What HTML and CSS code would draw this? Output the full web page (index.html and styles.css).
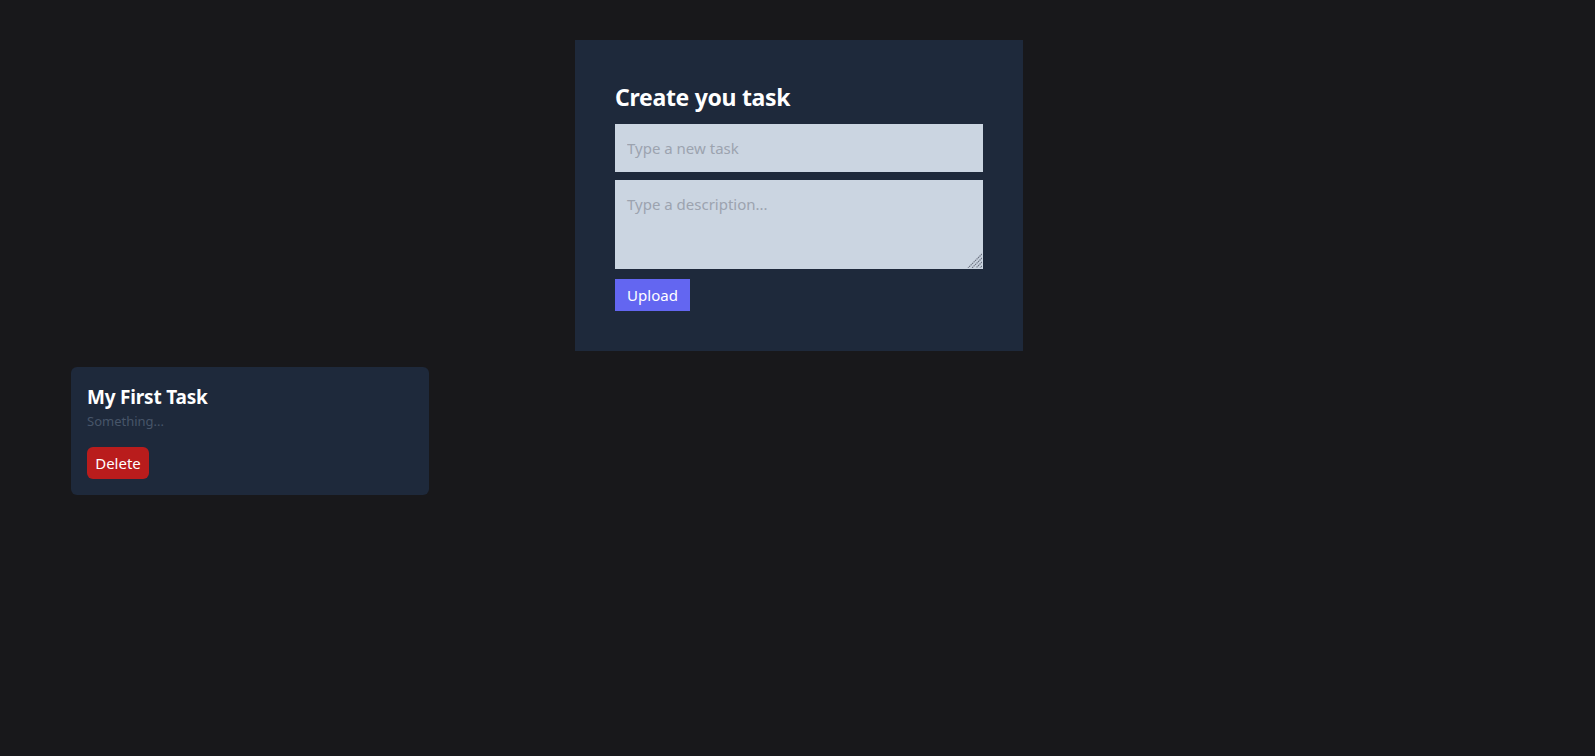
FILE: index.html
```html
<!DOCTYPE html>
<html lang="en">
<head>
<meta charset="utf-8">
<title>Tasks</title>
<link rel="stylesheet" href="styles.css">
</head>
<body>
<main class="page">
  <section class="form-wrap">
    <form class="task-form">
      <h1 class="form-title">Create you task</h1>
      <input class="field" type="text" placeholder="Type a new task">
      <textarea class="field area" placeholder="Type a description..."></textarea>
      <div class="actions"><button type="button" class="btn-upload">Upload</button></div>
    </form>
  </section>
  <section class="task-list">
    <article class="task-card">
      <h2 class="task-title">My First Task</h2>
      <p class="task-desc">Something...</p>
      <button type="button" class="btn-delete">Delete</button>
    </article>
  </section>
</main>
</body>
</html>
```
FILE: styles.css
```css
* { box-sizing: border-box; }
html, body { margin: 0; padding: 0; }
body {
  background: #18181b;
  font-family: "Noto Sans", "Open Sans", sans-serif;
  color: #fff;
  min-height: 756px;
}
.page { padding-top: 40px; }
.form-wrap { display: flex; justify-content: center; padding-left: 3px; }
.task-form {
  width: 448px;
  background: #1e293b;
  padding: 40px;
  display: flex;
  flex-direction: column;
}
.form-title {
  margin: 1px 0 11px;
  font-size: 23px;
  line-height: 32px;
  font-weight: 700;
  letter-spacing: -0.3px;
}
.field {
  display: block;
  width: 100%;
  background-color: #cbd5e1;
  border: none;
  outline: none;
  font-family: inherit;
  font-size: 15px;
  color: #1e293b;
  padding: 12px;
  height: 48px;
  margin: 0 0 8px;
}
.field::placeholder { color: #9ca3af; opacity: 1; }
.area {
  height: 89px;
  resize: none;
  line-height: 22px;
  padding-top: 13px;
  margin-bottom: 10px;
  background-image: url("data:image/svg+xml,%3Csvg xmlns='http://www.w3.org/2000/svg' width='15' height='15'%3E%3Cg stroke='%236b7280' stroke-width='1.2' stroke-dasharray='1.4 0.7'%3E%3Cline x1='15' y1='1' x2='1' y2='15'/%3E%3Cline x1='15' y1='5' x2='5' y2='15'/%3E%3Cline x1='15' y1='9' x2='9' y2='15'/%3E%3Cline x1='15' y1='13' x2='13' y2='15'/%3E%3C/g%3E%3C/svg%3E");
  background-repeat: no-repeat;
  background-position: right 1px bottom 1px;
}
.actions { display: flex; }
.btn-upload {
  background: #6366f1;
  color: #fff;
  border: none;
  font-family: inherit;
  font-size: 15px;
  height: 32px;
  width: 75px;
  padding: 0;
}
.task-list {
  display: flex;
  flex-wrap: wrap;
  padding: 16px 71px;
}
.task-card {
  width: 358px;
  background: #1e293b;
  border-radius: 6px;
  padding: 16px;
}
.task-title {
  margin: 0;
  font-size: 19px;
  line-height: 28px;
  font-weight: 700;
  letter-spacing: -0.2px;
}
.task-desc {
  margin: 0 0 16px;
  font-size: 13px;
  line-height: 20px;
  color: #475569;
}
.btn-delete {
  background: #b91c1c;
  color: #fff;
  border: none;
  border-radius: 6px;
  font-family: inherit;
  font-size: 15px;
  height: 32px;
  width: 62px;
  padding: 0;
}
```
